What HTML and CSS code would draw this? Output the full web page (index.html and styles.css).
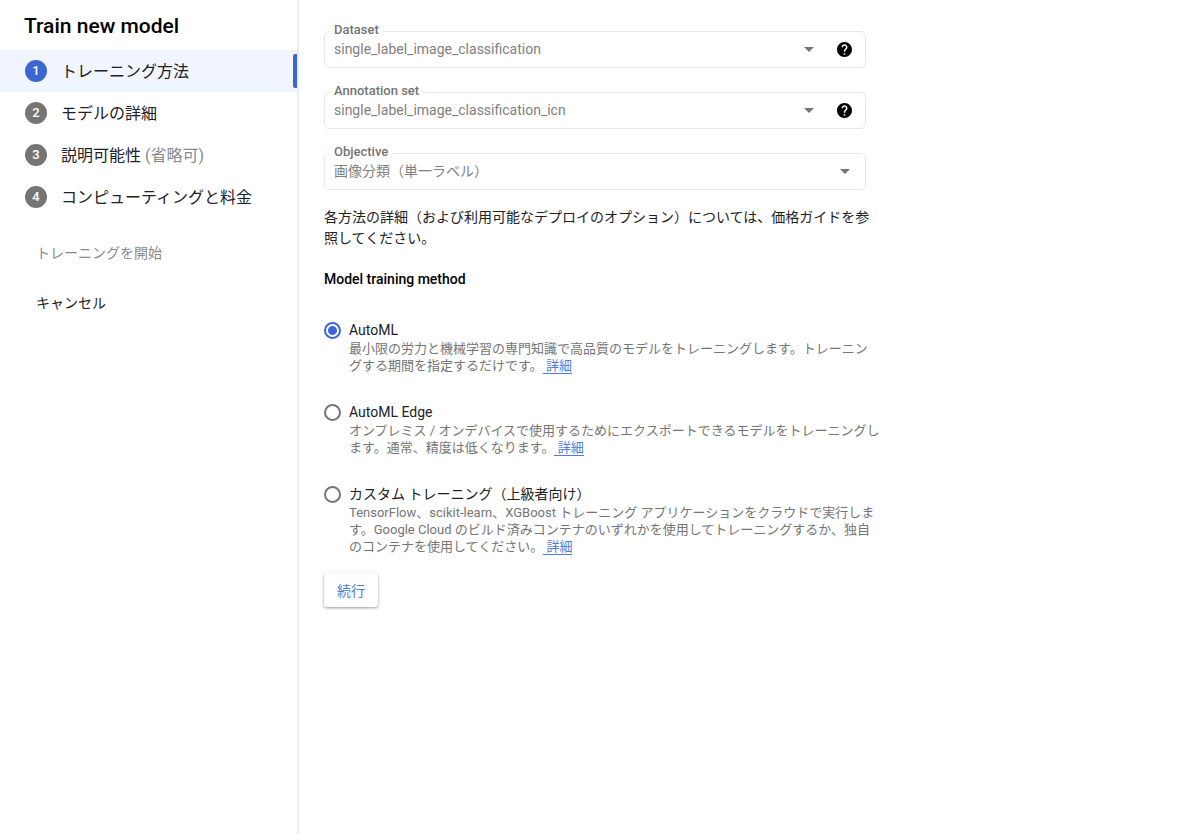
FILE: index.html
```html
<!DOCTYPE html>
<html lang="ja">
<head>
    <meta charset="UTF-8">
    <meta name="viewport" content="width=device-width, initial-scale=1.0">
    <title>Train new model</title>
    <link rel="stylesheet" href="styles.css">
</head>
<body>
    <!-- Shared icons -->
    <svg class="sprite" aria-hidden="true">
        <symbol id="icon-arrow" viewBox="0 0 10 5">
            <path d="M0 0h10L5 5z"/>
        </symbol>
        <symbol id="icon-help" viewBox="2 2 20 20">
            <path d="M12 2C6.48 2 2 6.48 2 12s4.48 10 10 10 10-4.480 10-10S17.520 2 12 2zm1 17h-2v-2h2v2zm2.070-7.750l-.9.920C13.450 12.900 13 13.500 13 15h-2v-.5c0-1.100.450-2.100 1.170-2.830l1.240-1.260c.370-.360.590-.860.590-1.410 0-1.100-.9-2-2-2s-2 .9-2 2H8c0-2.210 1.790-4 4-4s4 1.790 4 4c0 .880-.360 1.680-.930 2.250z"/>
        </symbol>
    </svg>

    <!-- Steps -->
    <aside class="sidebar">
        <h1>Train new model</h1>
        <ol class="steps">
            <li class="step active"><span class="step-number">1</span><a href="#method">トレーニング方法</a></li>
            <li class="step"><span class="step-number">2</span><a href="#details">モデルの詳細</a></li>
            <li class="step"><span class="step-number">3</span><a href="#explain">説明可能性 <span class="optional">(省略可)</span></a></li>
            <li class="step"><span class="step-number">4</span><a href="#pricing">コンピューティングと料金</a></li>
        </ol>
        <div class="sidebar-buttons">
            <button type="button" disabled>トレーニングを開始</button>
            <button type="button">キャンセル</button>
        </div>
    </aside>

    <!-- Training method form -->
    <main>
        <form id="method">
            <div class="field">
                <label for="dataset">Dataset</label>
                <select id="dataset" disabled>
                    <option>single_label_image_classification</option>
                </select>
                <svg class="arrow"><use href="#icon-arrow"/></svg>
                <button type="button" class="help" aria-label="Help: Dataset"><svg><use href="#icon-help"/></svg></button>
            </div>
            <div class="field">
                <label for="annotation">Annotation set</label>
                <select id="annotation" disabled>
                    <option>single_label_image_classification_icn</option>
                </select>
                <svg class="arrow"><use href="#icon-arrow"/></svg>
                <button type="button" class="help" aria-label="Help: Annotation set"><svg><use href="#icon-help"/></svg></button>
            </div>
            <div class="field">
                <label for="objective">Objective</label>
                <select id="objective" disabled>
                    <option>画像分類（単一ラベル）</option>
                </select>
                <svg class="arrow"><use href="#icon-arrow"/></svg>
            </div>

            <p class="intro">各方法の詳細（および利用可能なデプロイのオプション）については、価格ガイドを参<br>照してください。</p>

            <h2>Model training method</h2>

            <div class="options">
                <div class="option">
                    <input type="radio" name="method" id="automl" checked>
                    <div>
                        <label for="automl">AutoML</label>
                        <p>最小限の労力と機械学習の専門知識で高品質のモデルをトレーニングします。トレーニン<br>グする期間を指定するだけです。<a href="#automl-info">&nbsp;詳細</a></p>
                    </div>
                </div>
                <div class="option">
                    <input type="radio" name="method" id="edge">
                    <div>
                        <label for="edge">AutoML Edge</label>
                        <p>オンプレミス / オンデバイスで使用するためにエクスポートできるモデルをトレーニングし<br>ます。通常、精度は低くなります。<a href="#edge-info">&nbsp;詳細</a></p>
                    </div>
                </div>
                <div class="option">
                    <input type="radio" name="method" id="custom">
                    <div>
                        <label for="custom">カスタム トレーニング（上級者向け）</label>
                        <p>TensorFlow、scikit-learn、XGBoost トレーニング アプリケーションをクラウドで実行しま<br>す。Google Cloud のビルド済みコンテナのいずれかを使用してトレーニングするか、独自<br>のコンテナを使用してください。<a href="#custom-info">&nbsp;詳細</a></p>
                    </div>
                </div>
            </div>

            <button type="submit" class="continue">続行</button>
        </form>
    </main>
</body>
</html>
```

FILE: styles.css
```css
:root {
    --blue: #3c67d3;
    --link: #4f7be0;
    --text: #202124;
    --gray: #757575;
    --border: #e8e8e8;
}

* {
    box-sizing: border-box;
}

body {
    margin: 0;
    min-height: 100vh;
    display: flex;
    background: white;
    color: var(--text);
    font-family: Roboto, "Noto Sans CJK JP", sans-serif;
    font-size: 14px;
}

button,
select {
    font: inherit;
}

.sprite {
    display: none;
}

/* Sidebar */
.sidebar {
    flex: 0 0 299px;
    border-right: 2px solid #ececec;
}

h1 {
    margin: 14px 24px 12px;
    font-size: 21px;
    line-height: 24px;
    font-weight: 500;
    color: black;
}

.steps {
    margin: 0;
    padding: 0;
    list-style: none;
}

.step {
    display: flex;
    align-items: center;
    gap: 14px;
    height: 42px;
    padding-left: 25px;
    font-size: 16px;
}

.step a {
    padding-bottom: 2px;
    color: inherit;
    text-decoration: none;
}

.step-number {
    width: 22px;
    height: 22px;
    border-radius: 50%;
    background: var(--gray);
    color: white;
    font-size: 13px;
    line-height: 22px;
    font-weight: 500;
    text-align: center;
}

.step.active {
    background: #f0f5ff;
}

.step.active .step-number {
    background: var(--blue);
}

.step.active::after {
    content: "";
    width: 4px;
    height: 34px;
    margin-left: auto;
    border-radius: 2px 0 0 2px;
    background: var(--blue);
}

.optional {
    color: #8a8a8a;
}

.sidebar-buttons {
    display: flex;
    flex-direction: column;
    align-items: flex-start;
    gap: 14px;
    margin: 16px 24px;
}

.sidebar-buttons button {
    height: 36px;
    padding: 0 12px;
    border: none;
    background: none;
    color: var(--text);
    cursor: pointer;
}

.sidebar-buttons button:disabled {
    color: #8a8a8a;
    cursor: default;
}

/* Form */
main {
    flex: 1;
    padding: 31px 25px;
}

.field {
    position: relative;
    display: flex;
    align-items: center;
    max-width: 542px;
    height: 37px;
    margin-bottom: 24px;
    padding-right: 13px;
    border: 1px solid var(--border);
    border-radius: 5px;
}

/* Label sits over the top border */
.field label {
    position: absolute;
    top: -10px;
    left: 5px;
    padding: 0 4px;
    background: white;
    color: var(--gray);
    font-size: 13px;
    line-height: 16px;
    font-weight: 500;
}

.field select {
    flex: 1;
    min-width: 0;
    height: 35px;
    padding: 0 9px 1px;
    border: none;
    background: none;
    color: #808080;
    opacity: 1;
    appearance: none;
}

.arrow {
    width: 10px;
    height: 5px;
    margin-right: 2px;
    fill: var(--gray);
}

.help {
    display: flex;
    margin-left: 21px;
    padding: 0;
    border: none;
    background: none;
    cursor: pointer;
}

.help svg {
    width: 15px;
    height: 15px;
}

.intro {
    margin: 0 0 20px;
    line-height: 21px;
}

.field + .intro {
    margin-top: -7px;
}

h2 {
    margin: 0 0 31px;
    color: black;
    font-size: 14px;
    line-height: 20px;
    font-weight: 500;
}

.options {
    display: flex;
    flex-direction: column;
    gap: 28px;
}

.option {
    display: flex;
    align-items: flex-start;
    gap: 8px;
}

.option input {
    flex: none;
    width: 17px;
    height: 17px;
    margin: 2px 0;
    border: 2px solid var(--gray);
    border-radius: 50%;
    appearance: none;
}

.option input:checked {
    border-color: var(--blue);
    background: radial-gradient(circle, var(--blue) 4px, white 5px);
}

.option label {
    display: block;
    line-height: 20px;
}

.option p {
    margin: 0;
    color: var(--gray);
    font-size: 13px;
    line-height: 17px;
}

.option a {
    border-bottom: 1px solid var(--link);
    color: var(--link);
    text-decoration: none;
}

.continue {
    height: 34px;
    margin-top: 18px;
    padding: 0 13px 1px;
    border: none;
    border-radius: 3px;
    background: white;
    box-shadow: 0 1px 3px rgba(0, 0, 0, 0.4);
    color: var(--link);
    cursor: pointer;
}
```
